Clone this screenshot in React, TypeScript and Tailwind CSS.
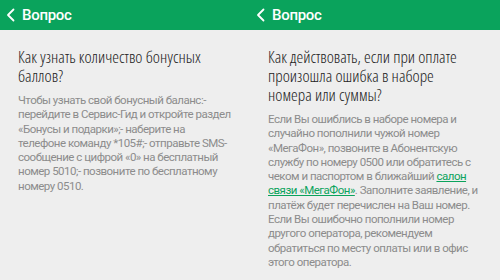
import type { ReactNode } from "react";

function Header() {
  return (
    <div className="h-[30px] bg-[#0aa35c] flex items-center pl-[6px] gap-[7px] text-white">
      <svg width="9" height="14" viewBox="0 0 9 14" fill="none">
        <path d="M7.5 1.5 L2 7 L7.5 12.5" stroke="white" strokeWidth="1.8" strokeLinecap="round" strokeLinejoin="round" />
      </svg>
      <span className="text-[15px] font-medium leading-none tracking-[-0.3px]">Вопрос</span>
    </div>
  );
}

function Lines({ lines }: { lines: ReactNode[] }) {
  return (
    <>
      {lines.map((l, i) => (
        <span key={i} className="block whitespace-nowrap">
          {l}
        </span>
      ))}
    </>
  );
}

function Panel({ title, body }: { title: string[]; body: ReactNode[] }) {
  return (
    <div className="w-[250px] flex flex-col">
      <Header />
      <div className="px-[18px] pt-[17px]">
        <h2 className="text-[17px] leading-[19px] text-[#222] font-['Open_Sans',sans-serif] font-stretch-[78%] font-light">
          <Lines lines={title} />
        </h2>
        <p className="mt-[8px] text-[11.5px] leading-[14.3px] text-[#8c8c8c] tracking-[-0.5px]">
          <Lines lines={body} />
        </p>
      </div>
    </div>
  );
}

export default function App() {
  return (
    <div className="w-[500px] h-[280px] bg-[#eeeeee] flex overflow-hidden font-['Roboto',sans-serif]">
      <Panel
        title={["Как узнать количество бонусных", "баллов?"]}
        body={[
          "Чтобы узнать свой бонусный баланс:-",
          "перейдите в Сервис-Гид и откройте раздел",
          "«Бонусы и подарки»;- наберите на",
          "телефоне команду *105#;- отправьте SMS-",
          "сообщение с цифрой «0» на бесплатный",
          "номер 5010;- позвоните по бесплатному",
          "номеру 0510.",
        ]}
      />
      <Panel
        title={["Как действовать, если при оплате", "произошла ошибка в наборе", "номера или суммы?"]}
        body={[
          "Если Вы ошиблись в наборе номера и",
          "случайно пополнили чужой номер",
          "«МегаФон», позвоните в Абонентскую",
          "службу по номеру 0500 или обратитесь с",
          <>
            чеком и паспортом в ближайший <a className="text-[#0aa35c] underline">салон</a>
          </>,
          <>
            <a className="text-[#0aa35c] underline">связи «МегаФон»</a>. Заполните заявление, и
          </>,
          "платёж будет перечислен на Ваш номер.",
          "Если Вы ошибочно пополнили номер",
          "другого оператора, рекомендуем",
          "обратиться по месту оплаты или в офис",
          "этого оператора.",
        ]}
      />
    </div>
  );
}
